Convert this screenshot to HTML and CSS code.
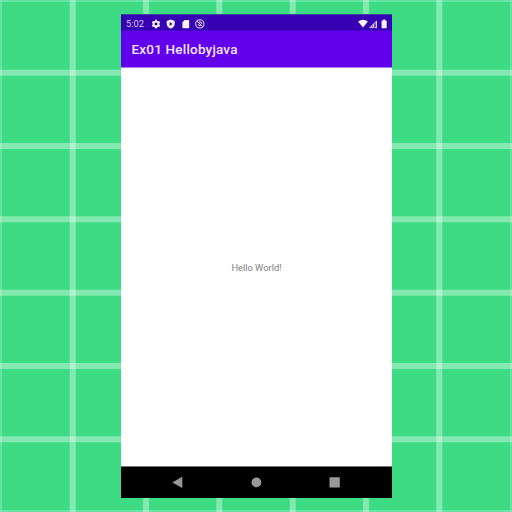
FILE: index.html
```
<!DOCTYPE html>
<html lang="en">
<head>
<meta charset="utf-8">
<title>Ex01 Hellobyjava</title>
<link rel="stylesheet" href="styles.css">
</head>
<body>
<svg class="grid" viewBox="0 0 512 512" aria-hidden="true">
  <path class="line" d="M72.7 0v512M146 0v512M219.3 0v512M292.7 0v512M366 0v512M439.3 0v512"/>
  <path class="line" d="M0 72.7h512M0 146h512M0 219.3h512M0 292.7h512M0 366h512M0 439.3h512"/>
  <path class="edge" d="M1 0v512M511 0v512"/>
  <path class="edge" d="M0 1h512M0 511h512"/>
</svg>
<main class="phone">
  <header class="status">
    <span class="time">5:02</span>
    <svg class="notices" viewBox="0 0 54 12">
      <g fill="none" stroke="currentColor">
        <circle cx="5" cy="6" r="2.4" stroke-width="1.9"/>
        <path stroke-width="2" d="M5 1.7v1.5M5 8.8v1.5M1.3 3.8l1.3.8M7.4 7.4l1.3.8M1.3 8.2l1.3-.8M7.4 4.6l1.3-.8"/>
      </g>
      <path fill="currentColor" fill-rule="evenodd" d="M19.7 1.4L23.7 3v2.7c0 2.4-1.7 4.2-4 4.9-2.3-.7-4-2.5-4-4.9V3zM18.6 4v3.7L21.7 5.9z"/>
      <path fill="currentColor" d="M33.6 1.9h3.8q.8 0 .8.8v6.7q0 .8-.8.8h-5.2q-.8 0-.8-.8V4.2z"/>
      <g fill="none" stroke="currentColor" stroke-width=".95">
        <circle cx="48.8" cy="5.9" r="4.1"/>
        <path d="M46.2 3.3l5.4 5.3M47.1 6.2a1.9 1.9 0 0 0 2.5 1.4M47.8 3.9q2.6-.9 3.1 2.1"/>
      </g>
    </svg>
    <svg class="system" viewBox="0 0 30 12">
      <path fill="currentColor" d="M.1 3.4Q5 0 9.9 3.4L5 9.6z"/>
      <path fill="currentColor" opacity=".3" d="M11 10L18.8 2.2V10z"/>
      <path fill="none" stroke="currentColor" stroke-width=".8" d="M12 9.7l6.5-6.5v6.5h-1.7M12 9.7h3.4V6.4"/>
      <path fill="currentColor" d="M25.2 1.5h2v.9h.9q.6 0 .6.6v6.6q0 .6-.6.6h-3.9q-.6 0-.6-.6V3q0-.6.6-.6h1z"/>
    </svg>
  </header>
  <h1 class="appbar">Ex01 Hellobyjava</h1>
  <section class="content"><p>Hello World!</p></section>
  <nav class="navbar">
    <svg viewBox="0 0 271 31">
      <path d="M51.3 15.4l10-5.6v11.2z"/>
      <circle cx="135.4" cy="15.4" r="4.9"/>
      <rect x="208.5" y="10.3" width="10.3" height="10.3" rx=".5"/>
    </svg>
  </nav>
</main>
</body>
</html>
```
FILE: styles.css
```
* { box-sizing: border-box; }

body {
  margin: 0;
  width: 512px;
  height: 512px;
  overflow: hidden;
  display: grid;
  background: #3ddc84;
  font-family: Roboto, sans-serif;
}

.grid, .phone { grid-area: 1 / 1; }

.grid {
  width: 512px;
  height: 512px;
}

.line, .edge {
  fill: none;
  stroke: #fff;
  stroke-width: 6;
  stroke-opacity: .37;
}

.edge {
  stroke-width: 2;
  stroke-opacity: .2;
}

.phone {
  width: 271px;
  height: 484px;
  margin: 14px 0 0 121px;
  display: flex;
  flex-direction: column;
  background: #fff;
}

.status {
  height: 17px;
  flex: none;
  display: flex;
  align-items: center;
  padding: 1px 4px 0 5px;
  background: #3700b3;
  border-top: 1px solid #38429f;
  box-shadow: inset 0 -1px #4600c5;
  color: #f7f4fd;
}

.time {
  width: 25px;
  color: #d9cef1;
  font-size: 9.4px;
  line-height: 12px;
}

.notices {
  width: 54px;
  height: 12px;
}

.system {
  width: 30px;
  height: 12px;
  margin-left: auto;
}

.appbar {
  height: 37px;
  flex: none;
  margin: 0;
  padding-left: 10.5px;
  background: #6200ee;
  border-bottom: 1px solid #a87af2;
  color: #f0e7fd;
  font-size: 13.49px;
  font-weight: 500;
  line-height: 36px;
  letter-spacing: .2px;
}

.content {
  flex: 1;
  display: grid;
  place-items: center;
  padding-top: 2px;
}

.content p {
  margin: 0;
  color: #808080;
  font-size: 9.3px;
  line-height: 12px;
}

.navbar {
  height: 32px;
  flex: none;
  background: #000;
  border-top: 1px solid #777;
}

.navbar svg {
  display: block;
  width: 271px;
  height: 31px;
  fill: #999;
}
```
